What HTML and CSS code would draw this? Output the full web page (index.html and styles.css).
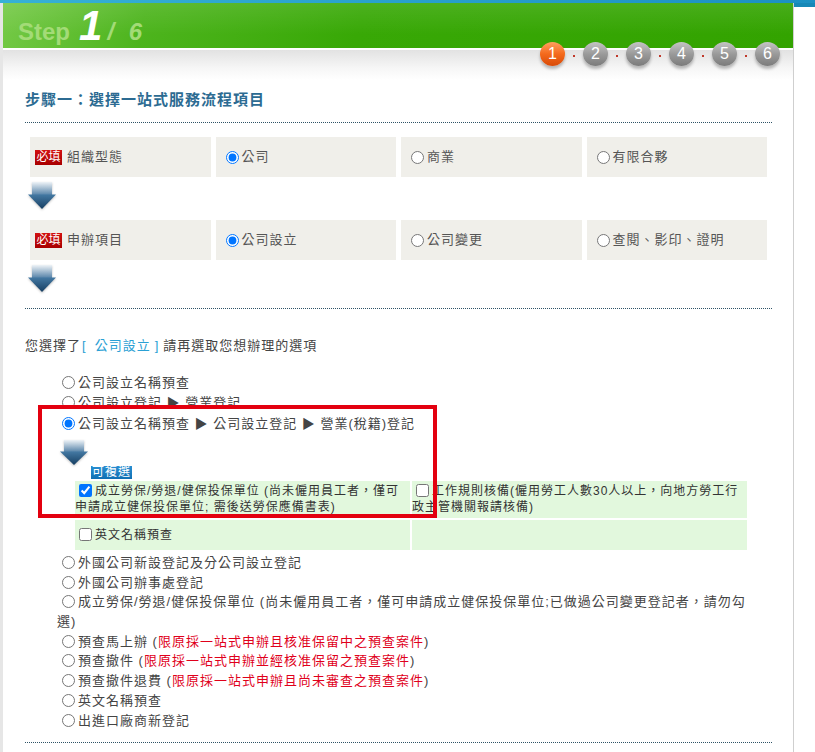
FILE: index.html
```html
<!DOCTYPE html>
<html lang="zh-Hant">
<head>
<meta charset="utf-8">
<title>Step 1 / 6</title>
<link rel="stylesheet" href="styles.css">
</head>
<body>
<div class="topband"></div>
<div class="frame">
  <div class="leftstrip"></div>
  <div class="main">
    <div class="banner">
      <span class="b-step">Step</span><span class="b-num">1</span><span class="b-total">/ 6</span>
    </div>
    <div class="stepsbar">
      <div class="steps">
        <span class="step active">1</span><span class="dot"></span>
        <span class="step">2</span><span class="dot"></span>
        <span class="step">3</span><span class="dot"></span>
        <span class="step">4</span><span class="dot"></span>
        <span class="step">5</span><span class="dot"></span>
        <span class="step">6</span>
      </div>
    </div>

    <div class="content">
      <h2 class="title">步驟一：選擇一站式服務流程項目</h2>

      <div class="choice-grid">
        <div class="cell"><span class="req">必填</span>組織型態</div>
        <label class="cell"><input type="radio" name="org" checked>公司</label>
        <label class="cell"><input type="radio" name="org">商業</label>
        <label class="cell"><input type="radio" name="org">有限合夥</label>
        <div class="arrow-row">
          <svg class="arrow" width="28" height="28" viewBox="0 0 28 28">
            <defs>
              <linearGradient id="as1" x1="0" y1="0" x2="0" y2="1"><stop offset="0" stop-color="#eef3f7"/><stop offset="1" stop-color="#5582a8"/></linearGradient>
              <linearGradient id="ah1" x1="0" y1="0" x2="0" y2="1"><stop offset="0" stop-color="#4479a3"/><stop offset="1" stop-color="#163e62"/></linearGradient>
            </defs>
            <rect x="4" y="0" width="20" height="13" fill="url(#as1)"/>
            <path d="M0 12.5 H28 L14 27 Z" fill="url(#ah1)"/>
          </svg>
        </div>
        <div class="cell"><span class="req">必填</span>申辦項目</div>
        <label class="cell"><input type="radio" name="item" checked>公司設立</label>
        <label class="cell"><input type="radio" name="item">公司變更</label>
        <label class="cell"><input type="radio" name="item">查閱、影印、證明</label>
        <div class="arrow-row">
          <svg class="arrow" width="28" height="28" viewBox="0 0 28 28">
            <defs>
              <linearGradient id="as2" x1="0" y1="0" x2="0" y2="1"><stop offset="0" stop-color="#eef3f7"/><stop offset="1" stop-color="#5582a8"/></linearGradient>
              <linearGradient id="ah2" x1="0" y1="0" x2="0" y2="1"><stop offset="0" stop-color="#4479a3"/><stop offset="1" stop-color="#163e62"/></linearGradient>
            </defs>
            <rect x="4" y="0" width="20" height="13" fill="url(#as2)"/>
            <path d="M0 12.5 H28 L14 27 Z" fill="url(#ah2)"/>
          </svg>
        </div>
      </div>

      <div class="sep first"></div>

      <p class="picked">您選擇了<span class="hl">[<span class="hl-in">公司設立</span>]</span>請再選取您想辦理的選項</p>

      <div class="options">
        <div class="annot"></div>
        <label class="opt top"><input type="radio" name="flow">公司設立名稱預查</label>
        <label class="opt top"><input type="radio" name="flow">公司設立登記 ▶ 營業登記</label>
        <label class="opt top"><input type="radio" name="flow" checked>公司設立名稱預查 ▶ 公司設立登記 ▶ 營業(稅籍)登記</label>
        <div class="sub">
          <svg class="arrow small" width="28" height="26" viewBox="0 0 28 28" preserveAspectRatio="none">
            <defs>
              <linearGradient id="as3" x1="0" y1="0" x2="0" y2="1"><stop offset="0" stop-color="#eef3f7"/><stop offset="1" stop-color="#5582a8"/></linearGradient>
              <linearGradient id="ah3" x1="0" y1="0" x2="0" y2="1"><stop offset="0" stop-color="#4479a3"/><stop offset="1" stop-color="#163e62"/></linearGradient>
            </defs>
            <rect x="4" y="0" width="20" height="13" fill="url(#as3)"/>
            <path d="M0 12.5 H28 L14 27 Z" fill="url(#ah3)"/>
          </svg>
          <div class="multi"><span>可複選</span></div>
          <div class="sub-grid">
            <div class="gcell"><label><input type="checkbox" checked>成立勞保/勞退/健保投保單位 (尚未僱用員工者，僅可申請成立健保投保單位; 需後送勞保應備書表)</label></div>
            <div class="gcell"><label><input type="checkbox">工作規則核備(僱用勞工人數30人以上，向地方勞工行政主管機關報請核備)</label></div>
            <div class="gcell"><label><input type="checkbox">英文名稱預查</label></div>
            <div class="gcell"></div>
          </div>
        </div>
        <label class="opt"><input type="radio" name="flow">外國公司新設登記及分公司設立登記</label>
        <label class="opt"><input type="radio" name="flow">外國公司辦事處登記</label>
        <label class="opt"><input type="radio" name="flow">成立勞保/勞退/健保投保單位 (尚未僱用員工者，僅可申請成立健保投保單位;已做過公司變更登記者，請勿勾選)</label>
        <label class="opt"><input type="radio" name="flow">預查馬上辦 (<span class="red">限原採一站式申辦且核准保留中之預查案件</span>)</label>
        <label class="opt"><input type="radio" name="flow">預查撤件 (<span class="red">限原採一站式申辦並經核准保留之預查案件</span>)</label>
        <label class="opt"><input type="radio" name="flow">預查撤件退費 (<span class="red">限原採一站式申辦且尚未審查之預查案件</span>)</label>
        <label class="opt"><input type="radio" name="flow">英文名稱預查</label>
        <label class="opt"><input type="radio" name="flow">出進口廠商新登記</label>
      </div>

      <div class="sep last"></div>
    </div>
  </div>
  <div class="rightfill"></div>
</div>
</body>
</html>
```

FILE: styles.css
```css
html, body {
  margin: 0;
  background: #fff;
}
body {
  font-family: "Liberation Sans", "Noto Sans CJK TC", sans-serif;
  font-size: 13px;
  line-height: 20px;
  letter-spacing: 1px;
  color: #444;
  height: 752px;
  overflow: hidden;
}

.topband {
  height: 3px;
  background: linear-gradient(90deg, #36b1d6, #1b90c2);
}
.frame {
  display: flex;
  align-items: stretch;
  min-height: 749px;
}
.leftstrip {
  width: 3px;
  background: #e6e6e6;
  flex: none;
}
.main {
  width: 790px;
  flex: none;
  border-right: 1px solid #cfcfcf;
  background: #fff;
}
.rightfill {
  flex: 1;
  border-top: 4px solid #1688b7;
  align-self: flex-start;
}

/* banner */
.banner {
  height: 47px;
  box-sizing: border-box;
  padding: 2px 0 0 15px;
  display: flex;
  align-items: baseline;
  overflow: hidden;
  background:
    linear-gradient(180deg, rgba(255,255,255,0.10), rgba(255,255,255,0) 70%),
    linear-gradient(100deg, #74c946 0%, #4db41d 18%, #38a806 45%, #33a300 100%);
  border-bottom: 2px solid #fff;
  letter-spacing: 0;
}
.b-step {
  font-size: 24px;
  line-height: 42px;
  font-weight: bold;
  color: #a3db77;
}
.b-num {
  font-size: 42px;
  line-height: 42px;
  font-weight: bold;
  font-style: italic;
  color: #fff;
  margin-left: 9px;
}
.b-total {
  font-size: 24px;
  line-height: 42px;
  font-weight: bold;
  font-style: italic;
  color: #a3db77;
  margin-left: 5px;
  word-spacing: 8px;
}

/* steps */
.stepsbar {
  display: flow-root;
  height: 30px;
  background: linear-gradient(180deg, #e2e2e2 0%, #f6f6f6 60%, #fff 100%);
}
.steps {
  display: flex;
  justify-content: flex-end;
  align-items: center;
  padding-right: 13px;
  margin-top: -8px;
  letter-spacing: 0;
}
.step {
  width: 25px;
  height: 24px;
  border-radius: 50%;
  display: flex;
  align-items: center;
  justify-content: center;
  color: #fff;
  font-size: 16px;
  line-height: 16px;
  background: linear-gradient(180deg, #c4c4c4 0%, #9a9a9a 50%, #7b7b7b 100%);
  box-shadow: 0 3px 3px rgba(0,0,0,0.25);
}
.step.active {
  background: linear-gradient(180deg, #ffa060 0%, #f46a1c 50%, #d84a08 100%);
}
.dot {
  width: 2px;
  height: 2px;
  margin: 4px 8px 0;
  background: #c0392b;
}

/* content */
.content {
  padding: 0 21px 0 22px;
}
.title {
  margin: 0;
  padding: 10px 0 12px;
  font-size: 15px;
  line-height: 20px;
  font-weight: bold;
  color: #2c6b92;
  border-bottom: 1px dotted #2e5366;
}

.choice-grid {
  display: grid;
  grid-template-columns: repeat(4, 1fr);
  gap: 5px;
  padding: 5px;
  margin-top: 9px;
}
.cell {
  height: 40px;
  background: #f0efea;
  display: flex;
  align-items: center;
  padding: 0 5px;
  color: #555;
}
.cell input {
  margin: 0 3px 0 5px;
}
.req {
  display: inline-block;
  background: linear-gradient(180deg, #d21010, #a80000);
  color: #fff;
  font-size: 12px;
  line-height: 15px;
  height: 15px;
  padding: 0 1.5px;
  letter-spacing: 0;
  margin-right: 5px;
}
.arrow-row {
  grid-column: 1 / -1;
  height: 33px;
}
.arrow {
  display: block;
  margin-left: -2px;
  filter: drop-shadow(0 1px 1px rgba(0,0,0,0.25));
}

.sep {
  border-top: 1px dotted #2e5366;
}
.sep.first {
  margin-top: 5px;
}
.sep.last {
  margin-top: 12px;
}

.picked {
  margin: 27px 0 0;
  line-height: 20px;
  color: #444;
}
.hl {
  color: #2aa0d4;
  margin: 0 4px 0 1px;
}
.hl-in {
  margin: 0 4px 0 8px;
}

.options {
  position: relative;
  margin: 17px 12px 0 0;
  padding-left: 32px;
}
.opt {
  display: block;
  line-height: 19.7px;
  color: #444;
}
.opt.top {
  line-height: 20.3px;
}
.opt input {
  margin: 0 3px 0 5px;
  vertical-align: -2px;
}
.red {
  color: #e0001b;
}

.sub {
  padding-top: 6px;
}
.arrow.small {
  margin-left: 3px;
}
.multi {
  margin-left: 34px;
  height: 12px;
}
.multi span {
  display: inline-block;
  vertical-align: top;
  height: 13px;
  line-height: 13px;
  font-size: 12px;
  padding: 0 1px;
  color: #fff;
  background: linear-gradient(180deg, #2a8fd2, #0f6fb3);
}
.sub-grid {
  display: grid;
  grid-template-columns: 335px 335px;
  grid-template-rows: 37px 30px;
  gap: 2px;
  padding: 2px;
  margin: 1px 0 1px 16px;
  width: max-content;
}
.gcell {
  background: #e2f8dd;
  display: flex;
  align-items: center;
  color: #333;
  font-size: 12px;
}
.gcell label {
  display: block;
  line-height: 16px;
}
.gcell input {
  margin: 0 3px 0 4px;
  vertical-align: -2px;
}

.annot {
  position: absolute;
  left: 13px;
  top: 32px;
  width: 399px;
  height: 113px;
  box-sizing: border-box;
  border: 4px solid #e3000f;
  pointer-events: none;
  z-index: 2;
}
```
